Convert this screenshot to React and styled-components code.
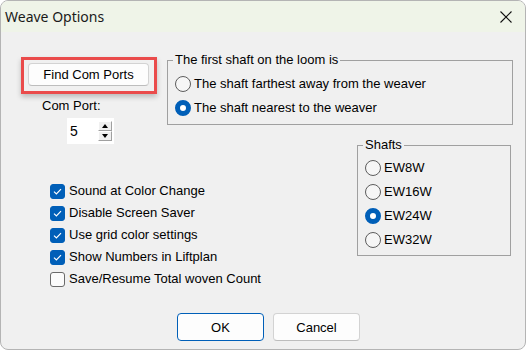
import React from 'react';
import styled, { createGlobalStyle } from 'styled-components';

const GlobalStyle = createGlobalStyle`
  html, body {
    margin: 0;
    background: #ffffff;
  }
  body {
    font-family: "Liberation Sans", Arial, sans-serif;
    color: #000;
  }
`;

const Window = styled.div`
  width: 526px;
  height: 350px;
  box-sizing: border-box;
  border: 1px solid #b4b4b4;
  border-radius: 8px;
  overflow: hidden;
  background: #f0f0f0;
  display: flex;
  flex-direction: column;
`;

const TitleBar = styled.div`
  height: 31px;
  flex-shrink: 0;
  display: flex;
  align-items: center;
  justify-content: space-between;
  padding: 0 13px 0 4px;
  background: #eff4e8;
`;

const Title = styled.span`
  font-family: "Noto Sans", "Liberation Sans", sans-serif;
  font-size: 14px;
  color: #1a1a1a;
`;

const Body = styled.div`
  flex: 1;
  display: flex;
  flex-direction: column;
  padding: 20px 12px 8px 20px;
  font-size: 13px;
`;

const Layout = styled.div`
  display: grid;
  grid-template-columns: 146px 190px 156px;
  grid-template-rows: auto 19px auto;
  grid-template-areas:
    "port first first"
    "port . shafts"
    "opts opts shafts";
`;

const PortArea = styled.div`
  grid-area: port;
  display: flex;
  flex-direction: column;
  align-items: flex-start;
`;

// red annotation box drawn round the button
const Highlight = styled.div`
  margin-top: 5px;
  border: 3px solid #ea4b4b;
  padding: 3px 5px 5px 4px;
  box-shadow: 0 3px 5px rgba(0, 0, 0, 0.22);
`;

const PushButton = styled.button`
  width: ${p => p.$w}px;
  height: ${p => p.$h}px;
  box-sizing: border-box;
  padding: 0;
  font: inherit;
  font-size: 13px;
  color: #000;
  background: #fdfdfd;
  border: 1px solid ${p => (p.$primary ? '#005fb8' : '#d3d3d3')};
  border-bottom-color: ${p => (p.$primary ? '#005fb8' : '#bdbdbd')};
  border-radius: 4px;
`;

const FieldLabel = styled.div`
  margin: 4px 0 0 21px;
  line-height: 16px;
`;

const Spinner = styled.div`
  margin: 4px 0 0 46px;
  width: 47px;
  height: 26px;
  box-sizing: border-box;
  background: #fff;
  display: flex;
  align-items: center;
  justify-content: space-between;
  padding: 0 2px 0 3px;
`;

const SpinValue = styled.span`
  font-size: 14px;
`;

const SpinButtons = styled.div`
  display: flex;
  flex-direction: column;
`;

const SpinButton = styled.div`
  width: 14px;
  height: 10px;
  box-sizing: border-box;
  background: #f0f0f0;
  border: 1px solid #a0a0a0;
  border-top-color: #fff;
  border-left-color: #fff;
  display: flex;
  align-items: center;
  justify-content: center;
`;

const Arrow = styled.span`
  width: 0;
  height: 0;
  border-left: 3.5px solid transparent;
  border-right: 3.5px solid transparent;
  ${p => (p.$down ? 'border-top: 4px solid #000;' : 'border-bottom: 4px solid #000;')}
`;

const Group = styled.fieldset`
  grid-area: ${p => p.$area};
  margin: ${p => p.$mt || 0}px 0 0 0;
  padding: ${p => p.$pt}px 7px ${p => p.$pb}px 7px;
  border: 1px solid #a0a0a0;
  min-width: 0;
  ${p => p.$w && `width: ${p.$w}px; box-sizing: border-box; align-self: start;`}
`;

const Legend = styled.legend`
  margin-left: -2px;
  padding: 0 2px;
  line-height: 16px;
  font-size: 13px;
`;

const OptionRow = styled.label`
  display: flex;
  align-items: center;
  height: ${p => p.$h}px;
  gap: ${p => p.$gap}px;
  white-space: nowrap;
  line-height: 16px;
`;

const RadioMark = styled.span`
  width: 16px;
  height: 16px;
  box-sizing: border-box;
  flex-shrink: 0;
  border-radius: 50%;
  border: ${p => (p.$on ? '5px solid #005fb8' : '1px solid #5d5d5d')};
  background: ${p => (p.$on ? '#ffffff' : '#f6f6f6')};
`;

const CheckMark = styled.span`
  width: 15px;
  height: 15px;
  box-sizing: border-box;
  flex-shrink: 0;
  border-radius: 3px;
  border: 1px solid ${p => (p.$on ? '#005fb8' : '#6a6a6a')};
  background: ${p => (p.$on ? '#005fb8' : '#fbfbfb')};
  display: flex;
  align-items: center;
  justify-content: center;
`;

const Options = styled.div`
  grid-area: opts;
  padding: 36px 0 0 29px;
  display: flex;
  flex-direction: column;
`;

const Footer = styled.div`
  margin-top: auto;
  display: flex;
  justify-content: center;
  gap: 9px;
  padding-left: 3px;
`;

const Radio = ({ on, children }) => (
  <OptionRow $h={24} $gap={3}>
    <RadioMark $on={on} />
    {children}
  </OptionRow>
);

const Check = ({ on, children }) => (
  <OptionRow $h={22} $gap={4}>
    <CheckMark $on={on}>
      {on && (
        <svg width="9" height="7" viewBox="0 0 9 7">
          <polyline points="1,3.6 3.4,6 8,1.2" fill="none" stroke="#fff" strokeWidth="1.2" />
        </svg>
      )}
    </CheckMark>
    {children}
  </OptionRow>
);

export default function App() {
  return (
    <>
      <GlobalStyle />
      <Window>
        <TitleBar>
          <Title>Weave Options</Title>
          <svg width="12" height="12" viewBox="0 0 12 12">
            <path d="M0.5 0.5 L11.5 11.5 M11.5 0.5 L0.5 11.5" stroke="#111" strokeWidth="1.1" />
          </svg>
        </TitleBar>
        <Body>
          <Layout>
            <PortArea>
              <Highlight>
                <PushButton $w={121} $h={23}>Find Com Ports</PushButton>
              </Highlight>
              <FieldLabel>Com Port:</FieldLabel>
              <Spinner>
                <SpinValue>5</SpinValue>
                <SpinButtons>
                  <SpinButton><Arrow /></SpinButton>
                  <SpinButton><Arrow $down /></SpinButton>
                </SpinButtons>
              </Spinner>
            </PortArea>

            <Group $area="first" $pt={4} $pb={4}>
              <Legend>The first shaft on the loom is</Legend>
              <Radio>The shaft farthest away from the weaver</Radio>
              <Radio on>The shaft nearest to the weaver</Radio>
            </Group>

            <Group $area="shafts" $mt={12} $pt={3} $pb={3} $w={154}>
              <Legend>Shafts</Legend>
              <Radio>EW8W</Radio>
              <Radio>EW16W</Radio>
              <Radio on>EW24W</Radio>
              <Radio>EW32W</Radio>
            </Group>

            <Options>
              <Check on>Sound at Color Change</Check>
              <Check on>Disable Screen Saver</Check>
              <Check on>Use grid color settings</Check>
              <Check on>Show Numbers in Liftplan</Check>
              <Check>Save/Resume Total woven Count</Check>
            </Options>
          </Layout>

          <Footer>
            <PushButton $w={87} $h={28} $primary>OK</PushButton>
            <PushButton $w={87} $h={28}>Cancel</PushButton>
          </Footer>
        </Body>
      </Window>
    </>
  );
}
